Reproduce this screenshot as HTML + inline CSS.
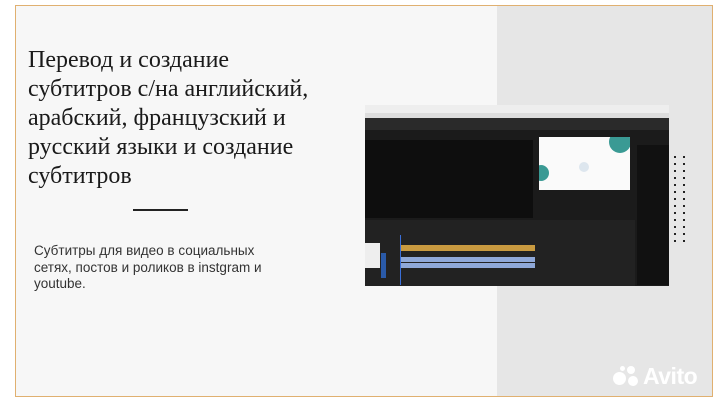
<!DOCTYPE html><html><head><meta charset="utf-8"><style>
*{margin:0;padding:0;box-sizing:border-box}
body{width:720px;height:402px;background:#fff;position:relative;overflow:hidden;font-family:"Liberation Sans",sans-serif}
.frame{position:absolute;left:15px;top:5px;width:698px;height:392px;border:1.5px solid #e0b070;background:#f7f7f7;overflow:hidden}
.gray{position:absolute;left:481px;top:0;right:0;bottom:0;background:#e6e6e6}
h1{position:absolute;left:12px;top:40px;font-family:"Liberation Serif",serif;font-weight:normal;font-size:24px;line-height:29px;color:#1a1a1a;white-space:nowrap}
.line{position:absolute;left:117px;top:203px;width:55px;height:2px;background:#222}
p{position:absolute;left:18px;top:237px;font-size:13.5px;line-height:16.5px;color:#333;white-space:nowrap}
.shot{position:absolute;left:349px;top:99px;width:304px;height:181px;background:#1b1b1b;overflow:hidden}
.d{position:absolute;left:674px;top:156px;width:12px}
.d i{display:block;width:12px;height:7px;position:relative}
.d i:before,.d i:after{content:"";position:absolute;top:0;width:2px;height:2px;background:#222}
.d i:before{left:0}.d i:after{left:9px}
.avito{position:absolute;left:643px;top:363px;color:#fff;font-size:23px;font-weight:bold;letter-spacing:-0.5px}
</style></head><body>
<div class="frame">
<div class="gray"></div>
<h1>Перевод и создание<br>субтитров с/на английский,<br>арабский, французский и<br>русский языки и создание<br>субтитров</h1>
<div class="line"></div>
<p>Субтитры для видео в социальных<br>сетях, постов и роликов в instgram и<br>youtube.</p>
<div class="shot">
 <div style="position:absolute;left:0;top:0;width:304px;height:8px;background:#eee"></div>
 <div style="position:absolute;left:0;top:8px;width:304px;height:5px;background:#ddd"></div>
 <div style="position:absolute;left:0;top:13px;width:304px;height:12px;background:#2a2a2a"></div>
 <div style="position:absolute;left:0;top:35px;width:168px;height:78px;background:#0e0e0e"></div>
 <div style="position:absolute;left:174px;top:32px;width:91px;height:53px;background:#fafafa;overflow:hidden">
  <div style="position:absolute;left:70px;top:-6px;width:22px;height:22px;border-radius:50%;background:#3a9a94"></div>
  <div style="position:absolute;left:-6px;top:28px;width:16px;height:16px;border-radius:50%;background:#3a9a94"></div>
  <div style="position:absolute;left:40px;top:25px;width:10px;height:10px;border-radius:50%;background:#dde6ee"></div>
 </div>
 <div style="position:absolute;left:272px;top:40px;width:32px;height:140px;background:#111"></div>
 <div style="position:absolute;left:0;top:115px;width:270px;height:66px;background:#222"></div>
 <div style="position:absolute;left:0;top:138px;width:15px;height:25px;background:#eee"></div>
 <div style="position:absolute;left:35px;top:140px;width:135px;height:6px;background:#c99a40"></div>
 <div style="position:absolute;left:35px;top:152px;width:135px;height:5px;background:#8fa8d8"></div>
 <div style="position:absolute;left:35px;top:158px;width:135px;height:5px;background:#8fa8d8"></div>
 <div style="position:absolute;left:35px;top:130px;width:1px;height:50px;background:#3a6fd8"></div>
 <div style="position:absolute;left:16px;top:148px;width:5px;height:25px;background:#2a5aa8"></div>
</div>
</div>
<div class="d"><i></i><i></i><i></i><i></i><i></i><i></i><i></i><i></i><i></i><i></i><i></i><i></i><i></i></div>
<div style="position:absolute;left:613px;top:372px;width:13px;height:13px;border-radius:50%;background:#fff"></div>
<div style="position:absolute;left:627px;top:366px;width:8px;height:8px;border-radius:50%;background:#fff"></div>
<div style="position:absolute;left:628px;top:376px;width:10px;height:10px;border-radius:50%;background:#fff"></div>
<div style="position:absolute;left:620px;top:366px;width:5px;height:5px;border-radius:50%;background:#fff"></div>
<div class="avito">Avito</div>
</body></html>
